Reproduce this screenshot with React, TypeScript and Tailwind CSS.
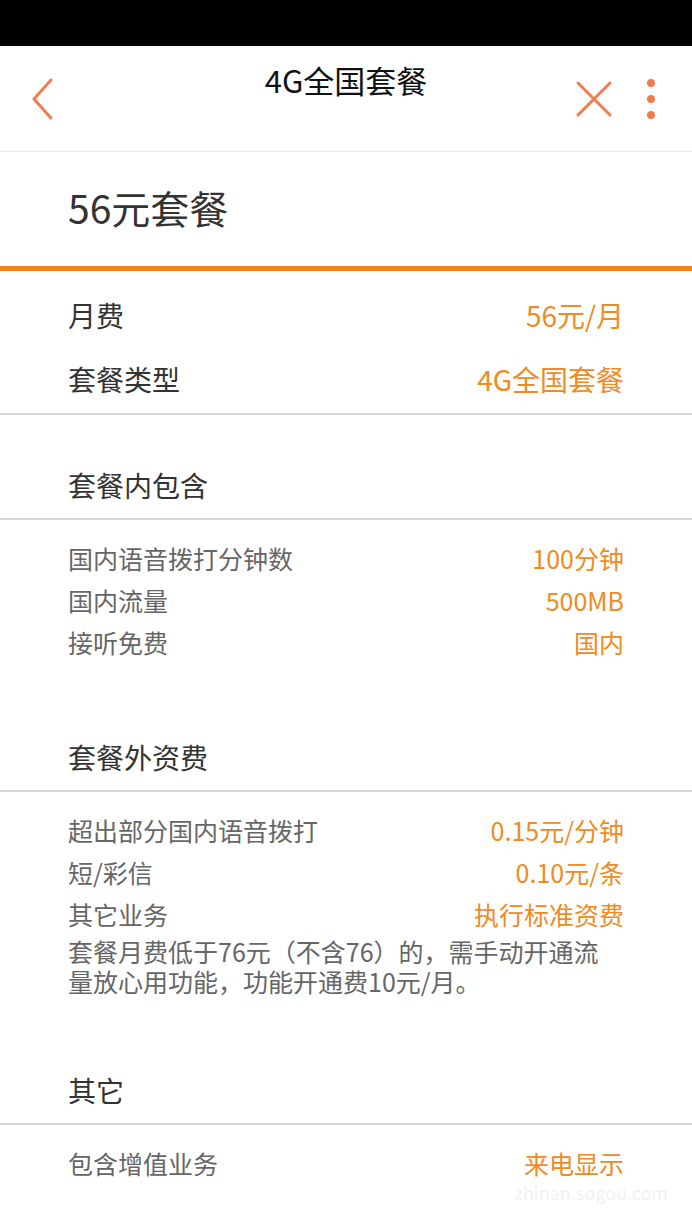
import React, { FC } from 'react'

const font = { fontFamily: '"Noto Sans CJK SC", "Noto Sans", sans-serif' }

type Item = { label: string; value: string }

const included: Item[] = [
  { label: '国内语音拨打分钟数', value: '100分钟' },
  { label: '国内流量', value: '500MB' },
  { label: '接听免费', value: '国内' },
]

const extra: Item[] = [
  { label: '超出部分国内语音拨打', value: '0.15元/分钟' },
  { label: '短/彩信', value: '0.10元/条' },
  { label: '其它业务', value: '执行标准资费' },
]

const SectionTitle: FC<{ title: string }> = ({ title }) => (
  <div className="h-[105px] flex items-end px-[68px] pb-[13px] border-b-2 border-[#d6d6d6]">
    <span className="text-[28px] leading-[40px] text-[#333]">{title}</span>
  </div>
)

const ItemRow: FC<Item> = ({ label, value }) => (
  <div className="h-[42px] flex items-center justify-between">
    <span className="text-[25px] text-[#666]">{label}</span>
    <span className="text-[25px] text-[#f08a22]">{value}</span>
  </div>
)

const App: FC = () => {
  return (
    <div className="w-[692px] h-[1230px] bg-white overflow-hidden relative" style={font}>
      <div className="h-[46px] bg-black" />

      {/* top bar */}
      <div className="h-[106px] flex items-center justify-between border-b border-[#ececec] relative">
        <div className="w-[86px] flex justify-center">
          <svg width="26" height="42" viewBox="0 0 26 42" fill="none">
            <path d="M21 2 L4 21 L21 40" stroke="#ef7d4f" strokeWidth="3" strokeLinecap="round" strokeLinejoin="round" />
          </svg>
        </div>
        <div className="absolute left-0 right-0 top-[14px] text-center text-[31px] leading-[40px] text-[#111]">
          4G全国套餐
        </div>
        <div className="flex items-center gap-[34px] pr-[36px]">
          <svg width="36" height="36" viewBox="0 0 36 36" fill="none">
            <path d="M2 2 L34 34 M34 2 L2 34" stroke="#ef7d4f" strokeWidth="3" strokeLinecap="round" />
          </svg>
          <svg width="10" height="42" viewBox="0 0 10 42">
            <circle cx="5" cy="5" r="4" fill="#ef7d4f" />
            <circle cx="5" cy="21" r="4" fill="#ef7d4f" />
            <circle cx="5" cy="37" r="4" fill="#ef7d4f" />
          </svg>
        </div>
      </div>

      <div className="h-[114px] flex items-center px-[68px] pb-[4px]">
        <span className="text-[39px] text-[#333] leading-none">56元套餐</span>
      </div>
      <div className="h-[5px] bg-[#f0861a]" />

      <div className="pt-[12px] pb-[2px] px-[68px] border-b-2 border-[#d6d6d6]">
        <div className="h-[64px] flex items-center justify-between text-[28px]">
          <span className="text-[#333]">月费</span>
          <span className="text-[#f08a22]">56元/月</span>
        </div>
        <div className="h-[64px] flex items-center justify-between text-[28px]">
          <span className="text-[#333]">套餐类型</span>
          <span className="text-[#f08a22]">4G全国套餐</span>
        </div>
      </div>

      <SectionTitle title="套餐内包含" />
      <div className="px-[68px] pt-[18px] pb-[23px]">
        {included.map((it) => (
          <ItemRow key={it.label} {...it} />
        ))}
      </div>

      <SectionTitle title="套餐外资费" />
      <div className="px-[68px] pt-[18px] pb-[24px]">
        {extra.map((it) => (
          <ItemRow key={it.label} {...it} />
        ))}
        <p className="text-[25px] leading-[30px] text-[#666] whitespace-nowrap">
          套餐月费低于76元（不含76）的，需手动开通流
          <br />
          量放心用功能，功能开通费10元/月。
        </p>
      </div>

      <SectionTitle title="其它" />
      <div className="px-[68px] pt-[18px]">
        <ItemRow label="包含增值业务" value="来电显示" />
      </div>

      <div className="absolute right-[24px] bottom-[24px] text-[18px] text-[#f1f1f1]">zhinan.sogou.com</div>
    </div>
  )
}

export default App
